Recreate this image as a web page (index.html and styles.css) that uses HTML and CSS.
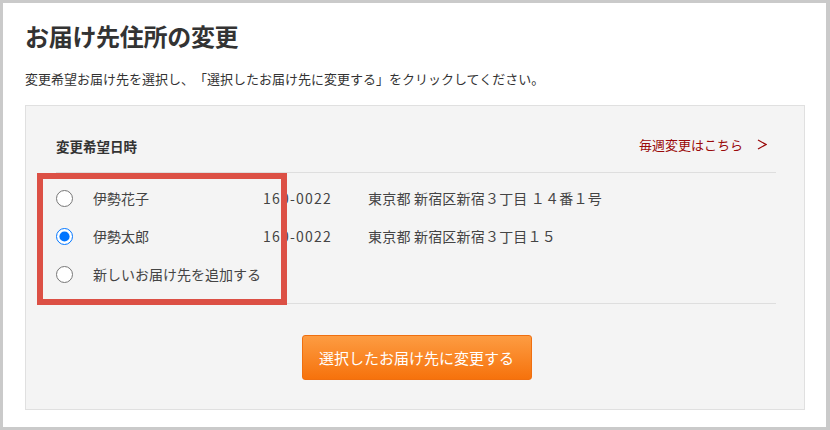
FILE: index.html
```html
<!DOCTYPE html>
<html lang="ja">
<head>
<meta charset="utf-8">
<link rel="stylesheet" href="styles.css">
</head>
<body>
<div class="frame">
  <h1 class="title">お届け先住所の変更</h1>
  <p class="lead">変更希望お届け先を選択し、「選択したお届け先に変更する」をクリックしてください。</p>
  <div class="panel">
    <div class="panel-head">
      <span class="panel-title">変更希望日時</span>
      <a class="weekly-link">毎週変更はこちら<svg class="chev" width="10" height="11" viewBox="0 0 10 11"><polyline points="1,1 9,5.5 1,10" fill="none" stroke="#9a0a0a" stroke-width="1.3"/></svg></a>
    </div>
    <div class="addr-list">
      <label class="addr-row">
        <span class="col-radio"><input type="radio" name="addr"></span>
        <span class="col-name">伊勢花子</span>
        <span class="col-zip">160-0022</span>
        <span class="col-addr">東京都 新宿区新宿３丁目 １４番１号</span>
      </label>
      <label class="addr-row">
        <span class="col-radio"><input type="radio" name="addr" checked></span>
        <span class="col-name">伊勢太郎</span>
        <span class="col-zip">160-0022</span>
        <span class="col-addr">東京都 新宿区新宿３丁目１５</span>
      </label>
      <label class="addr-row">
        <span class="col-radio"><input type="radio" name="addr"></span>
        <span class="col-name">新しいお届け先を追加する</span>
      </label>
    </div>
    <div class="actions">
      <button class="submit-btn" type="button">選択したお届け先に変更する</button>
    </div>
    <div class="highlight"></div>
  </div>
</div>
</body>
</html>
```
FILE: styles.css
```css
* { box-sizing: border-box; }
html, body { margin: 0; padding: 0; background: #fff; }
body {
  font-family: "Noto Sans CJK JP", "Noto Sans", sans-serif;
  color: #333;
  text-spacing-trim: space-all;
}
.frame {
  width: 830px;
  height: 430px;
  border: 3px solid #cacaca;
  border-right-width: 4px;
  border-bottom-width: 3px;
  padding: 17px 21px 0 22px;
  background: #fff;
}
.title {
  margin: 0;
  font-size: 24px;
  line-height: 32px;
  font-weight: bold;
  color: #333;
  letter-spacing: -0.3px;
}
.lead {
  margin: 17px 0 0;
  font-size: 13px;
  line-height: 20px;
  color: #333;
}
.panel {
  position: relative;
  margin-top: 16px;
  width: 780px;
  height: 305px;
  background: #f4f4f4;
  border: 1px solid #e0e0e0;
  padding: 0 28px 0 30px;
}
.panel-head {
  display: flex;
  justify-content: space-between;
  align-items: center;
  padding: 30px 9px 16px 0;
  border-bottom: 1px solid #dedede;
  line-height: 20px;
}
.panel-title {
  font-size: 13.5px;
  font-weight: bold;
  color: #333;
}
.weekly-link {
  display: flex;
  align-items: center;
  font-size: 13px;
  color: #9a0a0a;
  text-decoration: none;
  margin-top: -3px;
}
.chev { margin-left: 14px; }
.addr-list {
  padding: 6px 0 10px;
  border-bottom: 1px solid #dedede;
}
.addr-row {
  display: flex;
  align-items: center;
  height: 38px;
  font-size: 14px;
  color: #444;
}
.col-radio { width: 37px; display: flex; align-items: center; }
.col-radio input {
  width: 17px;
  height: 17px;
  margin: 0;
}
.col-name { width: 170px; }
.col-zip { width: 105px; letter-spacing: 1.2px; }
.col-addr { white-space: pre; letter-spacing: 0.2px; }
.actions {
  display: flex;
  justify-content: center;
  padding-top: 31px;
}
.submit-btn {
  width: 230px;
  height: 45px;
  border: 1px solid #ef6f10;
  border-radius: 3px;
  background: linear-gradient(#fd9c42, #f6720c);
  color: #fff;
  font-family: inherit;
  font-size: 15px;
  padding: 0;
  margin-left: 1px;
}
.highlight {
  position: absolute;
  left: 11px;
  top: 67px;
  width: 250px;
  height: 132px;
  border: 6px solid #dc5045;
}
```
